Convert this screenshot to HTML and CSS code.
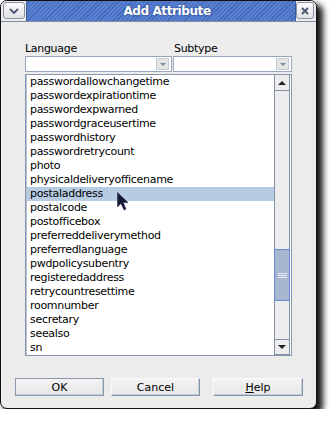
FILE: index.html
```html
<!DOCTYPE html>
<html lang="en">
<head>
    <meta charset="UTF-8">
    <title>Add Attribute</title>
    <link rel="stylesheet" href="styles.css">
</head>
<body>
<div class="window">
    <div class="titlebar">
        <div class="tb-side tb-left">
            <div class="tb-btn">
                <svg width="10" height="6" viewBox="0 0 10 6"><path d="M1 1 L5 5 L9 1" fill="none" stroke="#4a5670" stroke-width="1.8"/></svg>
            </div>
        </div>
        <div class="tb-title">Add Attribute</div>
        <div class="tb-side tb-right">
            <div class="tb-btn">
                <svg width="8" height="8" viewBox="0 0 8 8"><path d="M1 1 L7 7 M7 1 L1 7" fill="none" stroke="#4a5670" stroke-width="1.8"/></svg>
            </div>
        </div>
    </div>

    <div class="content">
        <div class="fields">
            <label class="lbl">Language</label>
            <label class="lbl">Subtype</label>
            <div class="combo"><span class="combo-arrow"></span></div>
            <div class="combo"><span class="combo-arrow"></span></div>
        </div>

        <div class="list">
            <ul class="items">
                <li>passwordallowchangetime</li>
                <li>passwordexpirationtime</li>
                <li>passwordexpwarned</li>
                <li>passwordgraceusertime</li>
                <li>passwordhistory</li>
                <li>passwordretrycount</li>
                <li>photo</li>
                <li>physicaldeliveryofficename</li>
                <li class="sel">postaladdress</li>
                <li>postalcode</li>
                <li>postofficebox</li>
                <li>preferreddeliverymethod</li>
                <li>preferredlanguage</li>
                <li>pwdpolicysubentry</li>
                <li>registeredaddress</li>
                <li>retrycountresettime</li>
                <li>roomnumber</li>
                <li>secretary</li>
                <li>seealso</li>
                <li>sn</li>
            </ul>
            <div class="scrollbar">
                <div class="sb-btn sb-up"><span class="tri-up"></span></div>
                <div class="sb-track">
                    <div class="sb-thumb"><span class="grip"></span></div>
                </div>
                <div class="sb-btn sb-down"><span class="tri-down"></span></div>
            </div>
        </div>

        <div class="buttons">
            <button class="btn btn-default">OK</button>
            <button class="btn btn-cancel">Cancel</button>
            <button class="btn btn-help"><u>H</u>elp</button>
        </div>
    </div>

    <svg class="cursor" width="12" height="19" viewBox="0 0 12 19">
        <path d="M0.5 0.5 L0.5 15 L4 11.5 L7 18 L9 17 L6.2 10.6 L11 10.6 Z" fill="#141a33" stroke="#2a3350" stroke-width="0.6"/>
    </svg>
</div>
</body>
</html>
```

FILE: styles.css
```css
* {
    margin: 0;
    padding: 0;
    box-sizing: border-box;
}

body {
    background: #fff;
    font-family: "DejaVu Sans", "Liberation Sans", sans-serif;
    font-size: 11px;
    color: #000;
}

.window {
    position: relative;
    width: 317px;
    height: 409px;
    border: 1px solid #111;
    border-radius: 7px;
    background: #ececec;
    box-shadow: 5px 5px 6px 1px rgba(0, 0, 0, 0.92);
    overflow: hidden;
}

/* title bar */
.titlebar {
    display: flex;
    height: 21px;
    border-bottom: 1px solid #7f8ea8;
}

.tb-side {
    background: #ececec;
    padding-top: 1px;
}

.tb-left {
    width: 25px;
    padding-left: 2px;
}

.tb-right {
    width: 20px;
}

.tb-btn {
    width: 22px;
    height: 17px;
    border: 1px solid #8a94a6;
    border-radius: 3px;
    background: linear-gradient(#fbfbfb, #e2e2e2);
    display: flex;
    align-items: center;
    justify-content: center;
}

.tb-right .tb-btn {
    width: 18px;
}

.tb-title {
    flex: 1;
    border-left: 1px solid #3b5a9e;
    border-right: 1px solid #3b5a9e;
    background-color: #5a80d2;
    background-image: repeating-linear-gradient(135deg, #5a80d2 0, #5a80d2 2px, #4467b8 2px, #4467b8 3px);
    color: #fff;
    font-weight: bold;
    font-size: 12px;
    letter-spacing: -0.4px;
    line-height: 20px;
    text-align: center;
    padding-left: 12px;
    text-shadow: 0 0 2px #1f3a7a;
}

/* content */
.content {
    padding: 20px 0 0 24px;
}

.fields {
    display: grid;
    grid-template-columns: 147px 119px;
    column-gap: 1px;
    width: 267px;
}

.lbl {
    line-height: 13px;
    padding-bottom: 1px;
    letter-spacing: -0.3px;
}

.lbl:nth-child(2) {
    padding-left: 1px;
}

.combo {
    height: 16px;
    background: #fff;
    border: 1px solid #9aa6bb;
    display: flex;
    justify-content: flex-end;
    padding: 1px 2px 1px 0;
}

.combo-arrow {
    width: 13px;
    height: 12px;
    background: #e6e6e6;
    border: 1px solid #c6ccd6;
    position: relative;
}

.combo-arrow:after {
    content: '';
    position: absolute;
    left: 3px;
    top: 4px;
    border-left: 3px solid transparent;
    border-right: 3px solid transparent;
    border-top: 3px solid #7c8aa4;
}

/* list */
.list {
    display: flex;
    width: 267px;
    height: 282px;
    margin-top: 2px;
    border: 1px solid #8796ae;
    background: #fff;
}

.items {
    flex: 1;
    list-style: none;
    overflow: hidden;
    border-left: 1px solid #b8c4d6;
}

.items li {
    height: 14px;
    line-height: 14px;
    padding-left: 3px;
    letter-spacing: -0.3px;
    white-space: nowrap;
    overflow: hidden;
}

.items li.sel {
    background: #b7cbe3;
}

.scrollbar {
    width: 17px;
    display: flex;
    flex-direction: column;
    border-right: 1px solid #fff;
}

.sb-btn {
    height: 16px;
    background: #ececec;
    border-left: 1px solid #8290a6;
    border-right: 1px solid #8290a6;
    display: flex;
    align-items: center;
    justify-content: center;
}

.sb-up {
    border-bottom: 1px solid #8290a6;
}

.sb-down {
    border-top: 1px solid #8290a6;
    border-bottom: 1px solid #8290a6;
}

.tri-up {
    border-left: 4px solid transparent;
    border-right: 4px solid transparent;
    border-bottom: 4px solid #222;
}

.tri-down {
    border-left: 4px solid transparent;
    border-right: 4px solid transparent;
    border-top: 4px solid #222;
}

.sb-track {
    flex: 1;
    background: #ececec;
    border-left: 1px solid #8290a6;
    border-right: 1px solid #8290a6;
}

.sb-thumb {
    margin: 158px -1px 0 -1px;
    height: 52px;
    background: #a6b7ce;
    border: 1px solid #6a8bdc;
    display: flex;
    align-items: center;
    justify-content: center;
}

.grip {
    width: 9px;
    height: 5px;
    border-top: 1px solid #e8eef8;
    border-bottom: 1px solid #e8eef8;
    position: relative;
}

.grip:after {
    content: '';
    position: absolute;
    left: 0;
    right: 0;
    top: 1px;
    border-top: 1px solid #e8eef8;
}

/* buttons */
.buttons {
    display: flex;
    margin: 22px 0 0 -10px;
}

.btn {
    height: 18px;
    width: 89px;
    font-family: "DejaVu Sans", "Liberation Sans", sans-serif;
    font-size: 11px;
    color: #000;
    background: linear-gradient(#f4f4f4, #e6e6e6);
    border: 1px solid;
    border-color: #fafafa #8593aa #8593aa #fafafa;
    box-shadow: inset -1px -1px 0 #c3ccda;
}

.btn-default {
    border-color: #8a98ae;
}

.btn-cancel {
    margin-left: 7px;
}

.btn-help {
    margin-left: 13px;
    width: 90px;
}

.cursor {
    position: absolute;
    left: 116px;
    top: 191px;
}
```
